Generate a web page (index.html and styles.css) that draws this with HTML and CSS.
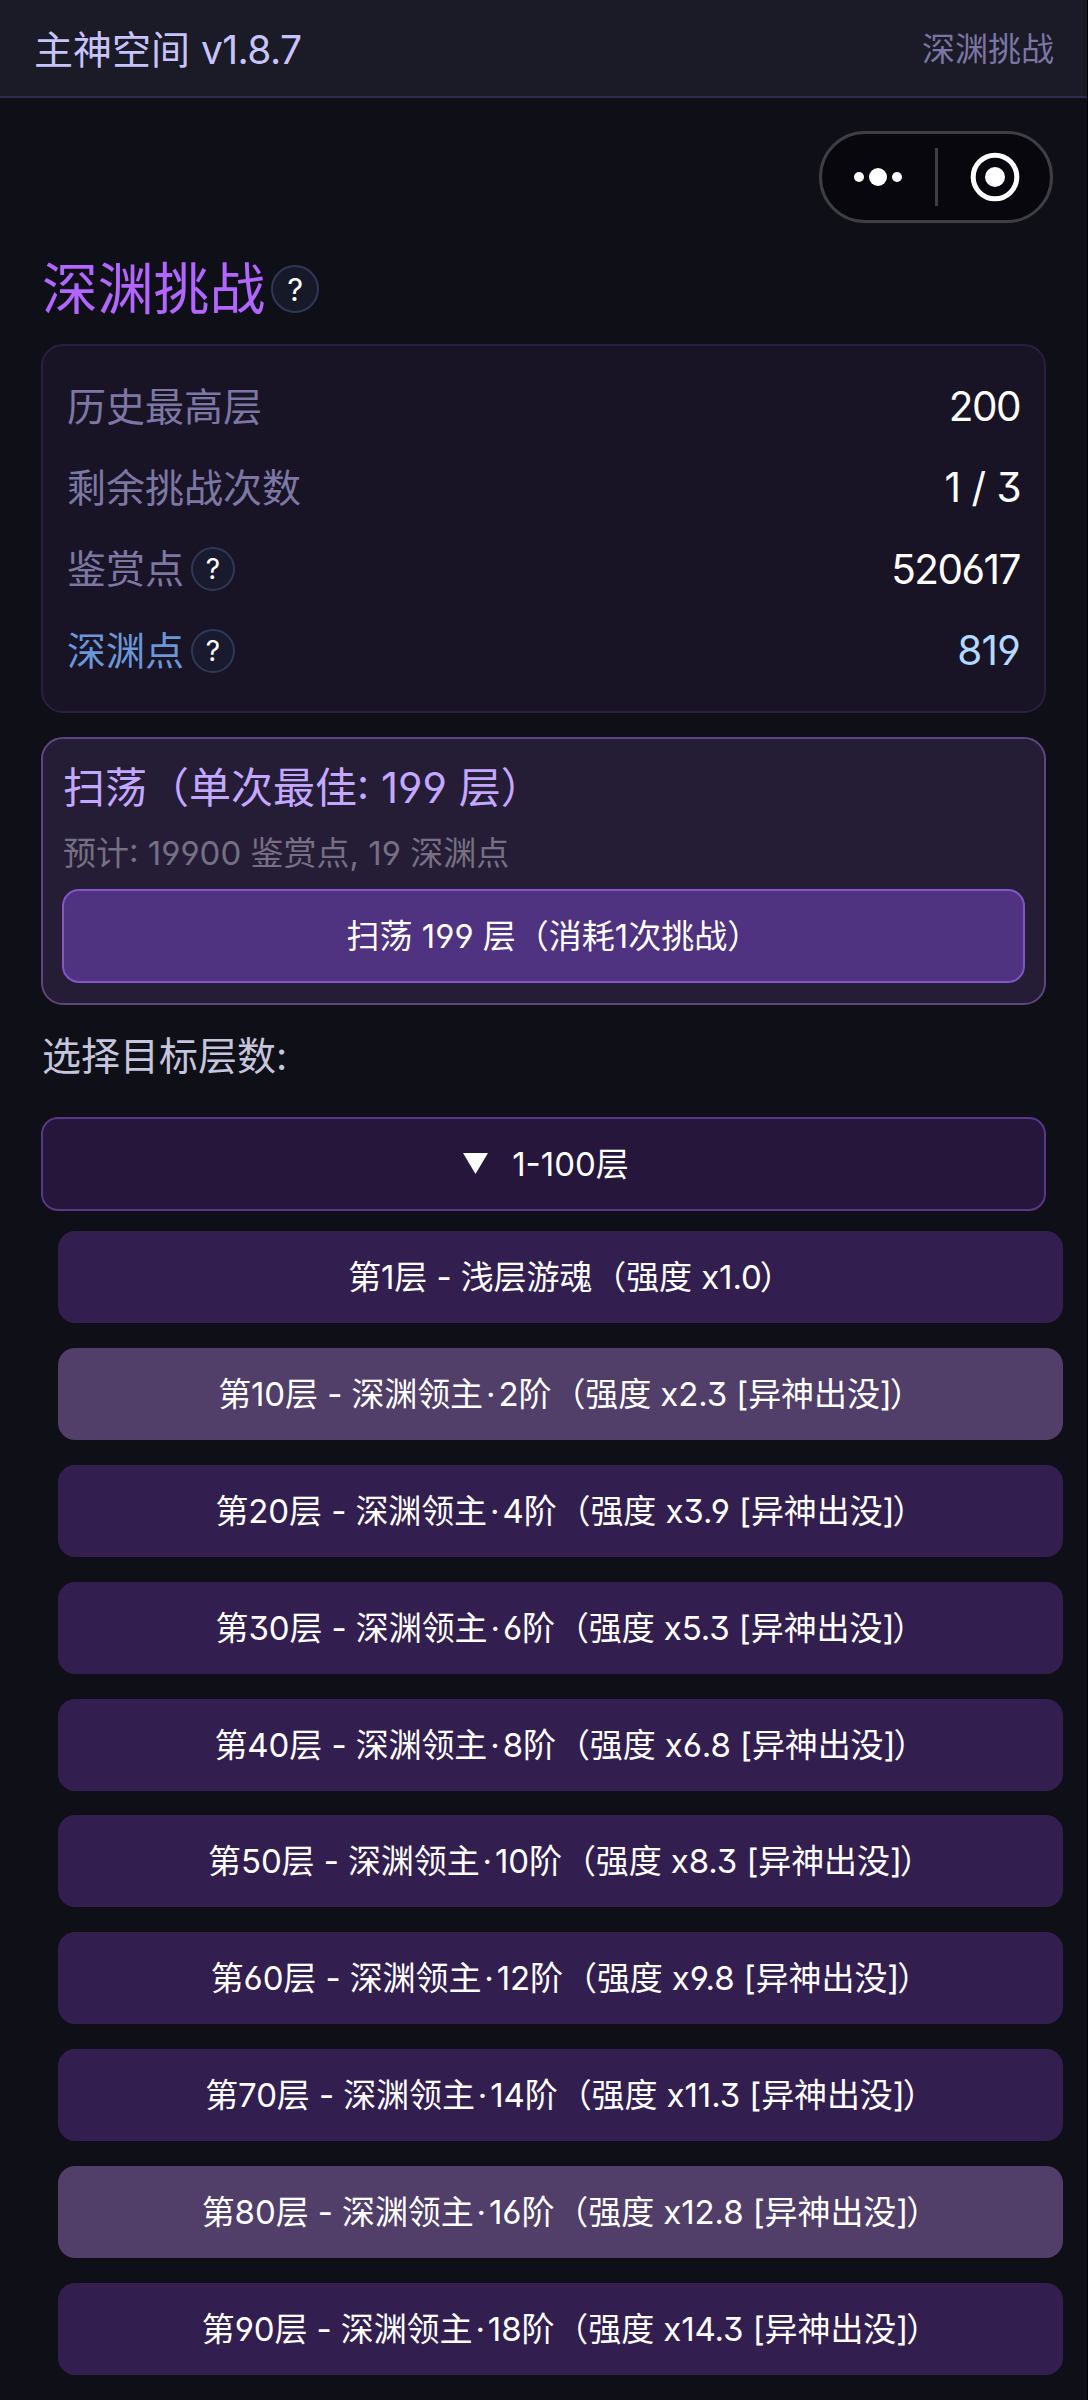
FILE: index.html
```html
<!DOCTYPE html>
<html lang="zh-CN">
<head>
<meta charset="utf-8">
<title>深渊挑战</title>
<link rel="stylesheet" href="styles.css">
</head>
<body>
<div class="app">
  <header class="topbar">
    <span class="topbar-title">主神空间 <span class="version">v1.8.7</span></span>
    <span class="topbar-page">深渊挑战</span>
  </header>

  <div class="capsule">
    <svg class="capsule-icon" width="60" height="60" viewBox="0 0 60 60"><circle cx="11" cy="30" r="5"/><circle cx="30" cy="30" r="9"/><circle cx="49" cy="30" r="5"/></svg>
    <span class="capsule-line"></span>
    <svg class="capsule-icon" width="60" height="60" viewBox="0 0 60 60"><circle cx="30" cy="30" r="21.8" fill="none" stroke="#fff" stroke-width="5"/><circle cx="30" cy="30" r="10"/></svg>
  </div>

  <main class="content">
    <div class="heading"><h1>深渊挑战</h1><span class="help help-large">?</span></div>

    <section class="stats">
      <div class="stat"><span class="name">历史最高层</span><span class="value">200</span></div>
      <div class="stat"><span class="name">剩余挑战次数</span><span class="value">1 / 3</span></div>
      <div class="stat"><span class="name">鉴赏点</span><span class="help">?</span><span class="value">520617</span></div>
      <div class="stat abyss"><span class="name">深渊点</span><span class="help">?</span><span class="value">819</span></div>
    </section>

    <section class="sweep">
      <h2>扫荡（单次最佳: 199 层）</h2>
      <p>预计: 19900 鉴赏点, 19 深渊点</p>
      <button class="btn btn-sweep"><span class="trim">扫荡 199 层（消耗1次挑战）</span></button>
    </section>

    <p class="prompt">选择目标层数:</p>

    <button class="btn btn-group"><svg class="caret" width="25" height="21" viewBox="0 0 25 21"><path d="M0 0H25L12.5 21Z"/></svg><span class="range">1-100层</span></button>

    <div class="levels">
      <button class="btn level"><span class="trim">第1层 - 浅层游魂<span class="open">（</span>强度 x1.0<span class="close">）</span></span></button>
      <button class="btn level marked"><span class="trim">第10层 - 深渊领主<span class="dot">·</span>2阶<span class="open">（</span>强度 x2.3 [异神出没]<span class="close">）</span></span></button>
      <button class="btn level"><span class="trim">第20层 - 深渊领主<span class="dot">·</span>4阶<span class="open">（</span>强度 x3.9 [异神出没]<span class="close">）</span></span></button>
      <button class="btn level"><span class="trim">第30层 - 深渊领主<span class="dot">·</span>6阶<span class="open">（</span>强度 x5.3 [异神出没]<span class="close">）</span></span></button>
      <button class="btn level"><span class="trim">第40层 - 深渊领主<span class="dot">·</span>8阶<span class="open">（</span>强度 x6.8 [异神出没]<span class="close">）</span></span></button>
      <button class="btn level"><span class="trim">第50层 - 深渊领主<span class="dot">·</span>10阶<span class="open">（</span>强度 x8.3 [异神出没]<span class="close">）</span></span></button>
      <button class="btn level"><span class="trim">第60层 - 深渊领主<span class="dot">·</span>12阶<span class="open">（</span>强度 x9.8 [异神出没]<span class="close">）</span></span></button>
      <button class="btn level"><span class="trim">第70层 - 深渊领主<span class="dot">·</span>14阶<span class="open">（</span>强度 x11.3 [异神出没]<span class="close">）</span></span></button>
      <button class="btn level marked"><span class="trim">第80层 - 深渊领主<span class="dot">·</span>16阶<span class="open">（</span>强度 x12.8 [异神出没]<span class="close">）</span></span></button>
      <button class="btn level"><span class="trim">第90层 - 深渊领主<span class="dot">·</span>18阶<span class="open">（</span>强度 x14.3 [异神出没]<span class="close">）</span></span></button>
    </div>
  </main>
</div>
</body>
</html>
```
FILE: styles.css
```css
* { box-sizing: border-box; margin: 0; padding: 0; }

body {
  background: #0f0f18;
  color: #fff;
  font-family: Inter, "Noto Sans CJK SC", sans-serif;
  font-feature-settings: "cv03", "cv04", "cv09";
  font-size: 39px;
}

.app {
  height: 2400px;
  overflow: hidden;
  border-right: 1px solid #000;
}

.topbar {
  height: 98px;
  padding: 0 34px 3px;
  display: flex;
  align-items: center;
  justify-content: space-between;
  background: #1b1a27;
  border-bottom: 2px solid #2f2b4a;
  color: #c8c4fb;
}
.version { letter-spacing: -0.6px; }
.topbar-page { margin-right: -1px; font-size: 33px; color: #7a75a3; }

.capsule {
  width: 234px;
  height: 92px;
  margin: 33px 34px 0 auto;
  display: flex;
  align-items: center;
  justify-content: center;
  gap: 27px;
  border: 3px solid #3e3e43;
  border-radius: 46px;
  background: #08070d;
}
.capsule-icon { fill: #fff; flex: none; }
.capsule-line { width: 3px; height: 58px; background: #3e3e43; }

.content { padding: 30px 41px 0; display: flex; flex-direction: column; }

.heading { height: 72px; display: flex; align-items: center; gap: 6px; margin-left: 1px; }
h1 { font-size: 55.8px; font-weight: 400; line-height: 72px; color: #b266ff; }

.help {
  width: 44px;
  height: 44px;
  margin-left: 7px;
  display: flex;
  align-items: center;
  justify-content: center;
  border: 2px solid #2f3858;
  border-radius: 50%;
  background: #1a1a2e;
  color: #fff;
  font-size: 28px;
}
.help-large { width: 48px; height: 48px; margin-left: 0; font-size: 31px; background: #171828; }

.stats {
  height: 369px;
  margin-top: 19px;
  padding: 20px 24px 0;
  border: 2px solid #2b1e42;
  border-radius: 22px;
  background: #191326;
}
.stat { height: 81.3px; display: flex; align-items: center; color: #7d77a3; }
.name { padding-bottom: 6px; }
.value { margin-left: auto; font-size: 40.5px; letter-spacing: -1.5px; word-spacing: 2px; color: #fff; }
.abyss { color: #6b96d8; }
.abyss .value { color: #b3d9ff; letter-spacing: -0.8px; }

.sweep {
  height: 268px;
  margin-top: 24px;
  padding: 19px;
  border: 2px solid #5d4680;
  border-radius: 22px;
  background: #251d36;
}
h2 { height: 60px; padding-left: 1px; font-size: 42px; line-height: 60px; font-weight: 400; color: #c4a7ff; white-space: nowrap; }
.sweep p { height: 71px; padding-left: 1px; font-size: 33px; line-height: 71px; color: #757082; }

.btn {
  width: 100%;
  padding-bottom: 4px;
  display: flex;
  align-items: center;
  justify-content: center;
  border: 0;
  border-radius: 17px;
  color: #fff;
  font: inherit;
  font-size: 33px;
  white-space: nowrap;
}
/* the closing full-width bracket ends in a blank half */
.trim { margin-right: -0.6em; }
.open { margin-left: 1px; }
.close { margin-left: -2px; }
.dot { margin: 0 3px; }

.btn-sweep { height: 94px; background: #4f3280; border: 2px solid #8455c4; }

.prompt { height: 112px; padding-left: 1px; line-height: 102px; color: #c5c5dd; }

.btn-group { height: 94px; gap: 24px; padding-left: 5px; background: #26163b; border: 2px solid #5a3688; }
.caret { fill: #fff; margin-top: 3px; }

.levels {
  width: 1005px;
  margin: 20px 0 0 17px;
  display: flex;
  flex-direction: column;
  gap: 24.9px;
}
.level { height: 92px; background: #331e50; letter-spacing: -0.1px; }
.marked { background: #513f6a; }
```
